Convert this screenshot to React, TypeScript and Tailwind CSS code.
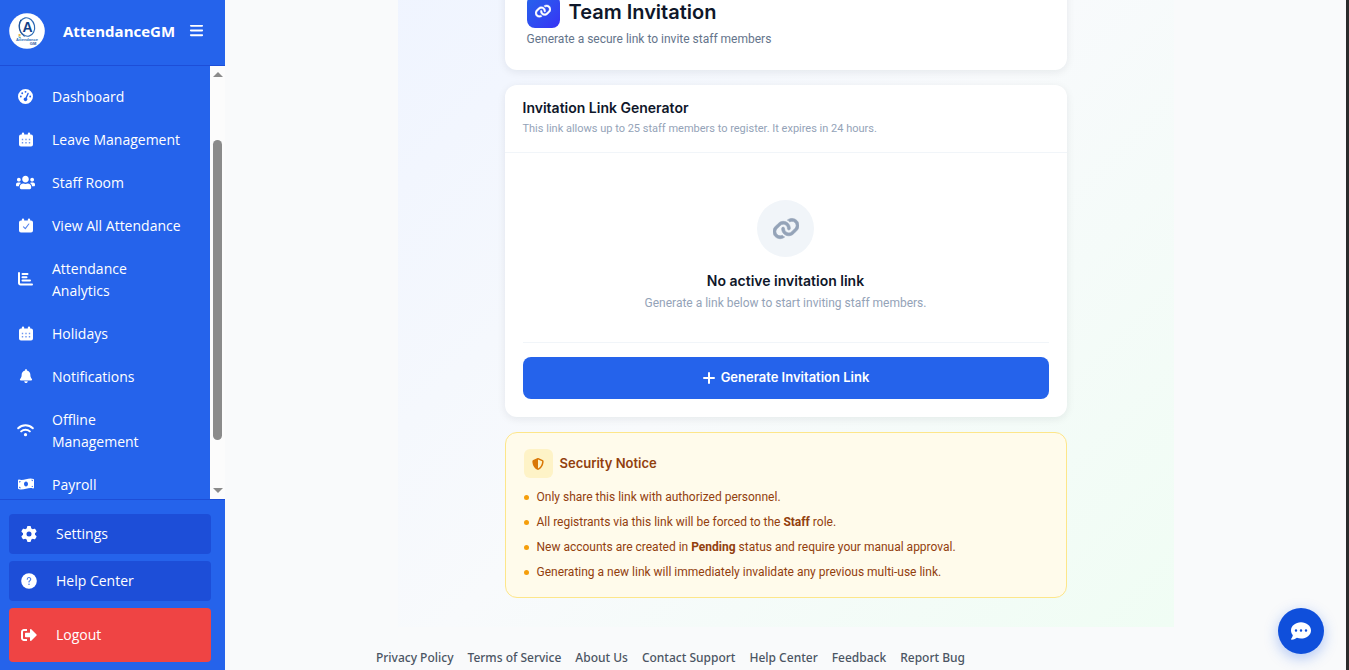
import React from 'react';
import { FaMoneyBillWave, FaSignOutAlt, FaUsers } from 'react-icons/fa';
import { FaBars, FaBell, FaCommentDots, FaGaugeHigh, FaGear, FaShieldHalved } from 'react-icons/fa6';

interface IconProps {
  className?: string;
}

const LinkIcon: React.FC<IconProps> = ({ className }) => (
  <svg viewBox="0 0 576 512" fill="currentColor" stroke="currentColor" strokeWidth="14" className={className} aria-hidden="true">
    <path d="M419.5 96c-16.6 0-32.7 4.5-46.8 12.7-15.8-16-34.2-29.4-54.5-39.5 28.2-24 64.1-37.2 101.3-37.2 86.4 0 156.5 70 156.5 156.5 0 41.5-16.5 81.3-45.8 110.6l-71.1 71.1c-29.3 29.3-69.1 45.8-110.6 45.8-86.4 0-156.5-70-156.5-156.5 0-1.5 0-3 .1-4.5 .5-17.7 15.2-31.6 32.9-31.1s31.6 15.2 31.1 32.9c0 .9 0 1.8 0 2.6 0 51.1 41.4 92.5 92.5 92.5 24.5 0 48-9.7 65.4-27.1l71.1-71.1c17.3-17.3 27.1-40.9 27.1-65.4 0-51.1-41.4-92.5-92.5-92.5zM275.2 173.3c-1.9-.8-3.8-1.9-5.5-3.1-12.6-6.5-27-10.2-42.1-10.2-24.5 0-48 9.7-65.4 27.1L91.1 258.2c-17.3 17.3-27.1 40.9-27.1 65.4 0 51.1 41.4 92.5 92.5 92.5 16.5 0 32.6-4.4 46.7-12.6 15.8 16 34.2 29.4 54.6 39.5-28.2 23.9-64 37.2-101.3 37.2-86.4 0-156.5-70-156.5-156.5 0-41.5 16.5-81.3 45.8-110.6l71.1-71.1c29.3-29.3 69.1-45.8 110.6-45.8 86.6 0 156.5 70.6 156.5 156.9 0 1.3 0 2.6 0 3.9-.4 17.7-15.1 31.6-32.8 31.2s-31.6-15.1-31.2-32.8c0-.8 0-1.5 0-2.3 0-33.7-18-63.3-44.8-79.6z" />
  </svg>
);

const CalendarBody: React.FC = () => (
  <path
    fill="currentColor"
    d="M4 .5a1.200 1.200 0 0 1 1.200 1.200V2.500h3.600V1.700a1.200 1.200 0 0 1 2.400 0V2.500H12a2 2 0 0 1 2 2v8a2 2 0 0 1-2 2H2a2 2 0 0 1-2-2v-8a2 2 0 0 1 2-2h.8V1.700A1.200 1.200 0 0 1 4 .5z"
  />
);

const CalendarIcon: React.FC<IconProps> = ({ className }) => (
  <svg viewBox="0 0 14 15" className={className} aria-hidden="true">
    <CalendarBody />
    <path
      fill="#6f97f1"
      d="M2.800 6.800h1.400v1.400H2.800zM6.300 6.800h1.400v1.400H6.300zM9.800 6.800h1.400v1.400H9.800zM2.800 10h1.400v1.400H2.800zM6.300 10h1.400v1.400H6.300zM9.800 10h1.400v1.400H9.800z"
    />
  </svg>
);

const CalendarCheckIcon: React.FC<IconProps> = ({ className }) => (
  <svg viewBox="0 0 14 15" className={className} aria-hidden="true">
    <CalendarBody />
    <path d="M4.500 8.800l1.800 1.800 3.500-4.600" fill="none" stroke="#5584ee" strokeWidth="1.100" strokeLinecap="round" strokeLinejoin="round" />
  </svg>
);

const ChartIcon: React.FC<IconProps> = ({ className }) => (
  <svg viewBox="0 0 15 14" fill="none" stroke="currentColor" strokeWidth="2" strokeLinecap="round" strokeLinejoin="round" className={className} aria-hidden="true">
    <path d="M1 1v10a1.500 1.500 0 0 0 1.500 1.500H14M4.500 2h5M4.500 5.300h4M4.500 8.600h7.500" />
  </svg>
);

const WifiIcon: React.FC<IconProps> = ({ className }) => (
  <svg viewBox="0 0 17 14" fill="none" stroke="currentColor" strokeWidth="2" strokeLinecap="round" className={className} aria-hidden="true">
    <path d="M1.200 5.200a10.500 10.500 0 0 1 14.600 0M4.200 8.400a6.200 6.200 0 0 1 8.600 0" />
    <circle cx="8.500" cy="11.700" r="1.600" fill="currentColor" stroke="none" />
  </svg>
);

const QuestionIcon: React.FC<IconProps> = ({ className }) => (
  <svg viewBox="0 0 16 16" fill="none" className={className} aria-hidden="true">
    <circle cx="8" cy="8" r="7.800" fill="currentColor" />
    <path d="M6.300 6.200a1.700 1.700 0 1 1 2.500 1.500c-.6.300-.8.600-.8 1.200" stroke="#4a7cec" strokeWidth="1.200" strokeLinecap="round" />
    <circle cx="8" cy="11.200" r=".8" fill="#4a7cec" />
  </svg>
);

const PlusIcon: React.FC<IconProps> = ({ className }) => (
  <svg viewBox="0 0 14 14" className={className} aria-hidden="true">
    <path d="M7 2v10M2 7h10" stroke="currentColor" strokeWidth="2" strokeLinecap="round" />
  </svg>
);

const Logo: React.FC = () => (
  <svg viewBox="0 0 36 36" className="size-9 shrink-0" role="img" aria-label="AttendanceGM logo">
    <circle cx="18" cy="18" r="17.800" fill="#fff" />
    <ellipse cx="18" cy="14" rx="7.600" ry="9.300" fill="none" stroke="#2f6db5" strokeWidth="1.200" transform="rotate(-12 18 14)" />
    <path d="M12 6.500C8.500 12 10 20 15.500 23.500" fill="none" stroke="#1d4f96" strokeWidth="1" />
    <text x="18.500" y="19" textAnchor="middle" fontSize="14" fontWeight="700" fontFamily="Liberation Sans, sans-serif" fill="#123f86">A</text>
    <path d="M9.500 21h2v2.500h-2z" fill="#e9b949" />
    <path d="M9.500 24l2.500 1" stroke="#3fa7d6" strokeWidth="1" />
    <text x="18" y="28" textAnchor="middle" fontSize="4" fontWeight="700" fontFamily="Liberation Sans, sans-serif" fill="#2f6db5">Attendance</text>
    <text x="24" y="32" textAnchor="middle" fontSize="4" fontWeight="700" fontFamily="Liberation Sans, sans-serif" fill="#1d4f96">GM</text>
  </svg>
);

const navItems = [
  { label: 'Dashboard', icon: <FaGaugeHigh className="size-[15px]" /> },
  { label: 'Leave Management', icon: <CalendarIcon className="h-[15px] w-[14px]" /> },
  { label: 'Staff Room', icon: <FaUsers className="size-[19px]" /> },
  { label: 'View All Attendance', icon: <CalendarCheckIcon className="h-[15px] w-[14px]" /> },
  { label: 'Attendance Analytics', icon: <ChartIcon className="h-[14px] w-[15px]" /> },
  { label: 'Holidays', icon: <CalendarIcon className="h-[15px] w-[14px]" /> },
  { label: 'Notifications', icon: <FaBell className="size-[14px]" /> },
  { label: 'Offline Management', icon: <WifiIcon className="h-[14px] w-[17px]" /> },
  { label: 'Payroll', icon: <FaMoneyBillWave className="size-4" /> },
];

const footerLinks = ['Privacy Policy', 'Terms of Service', 'About Us', 'Contact Support', 'Help Center', 'Feedback', 'Report Bug'];

const Sidebar: React.FC = () => (
  <aside className="flex h-screen w-[225px] shrink-0 flex-col bg-[#2563eb] text-sm font-medium text-white">
    <div className="flex h-[66px] shrink-0 items-center border-b border-[#1d4ed8] pb-1 pl-[9px]">
      <Logo />
      <span className="ml-[18px] text-[15px] leading-6 font-bold">AttendanceGM</span>
      <button type="button" aria-label="Toggle menu" className="ml-[14px]">
        <FaBars className="size-[15px]" />
      </button>
    </div>

    <div className="flex min-h-0 flex-1">
      <nav className="flex min-w-0 flex-1 flex-col gap-[5px] overflow-hidden pt-3">
        {navItems.map((item) => (
          <a key={item.label} href="#" className="flex shrink-0 items-center py-2 pl-[15px] leading-[22px]">
            <span className="flex w-[21px] shrink-0 justify-center pb-[2px]">{item.icon}</span>
            <span className="ml-4 max-w-[130px]">{item.label}</span>
          </a>
        ))}
      </nav>
      {/* scrollbar */}
      <div className="flex w-[15px] shrink-0 flex-col items-center bg-[#fcfcfc] py-[6px]">
        <svg viewBox="0 0 10 5" className="h-[5px] w-[10px]" aria-hidden="true">
          <path d="M5 0l5 5H0z" fill="#8b8b8b" />
        </svg>
        <div className="mt-[63px] mb-[48px] w-[9px] flex-1 rounded-full bg-[#8b8b8b]" />
        <svg viewBox="0 0 10 5" className="h-[5px] w-[10px]" aria-hidden="true">
          <path d="M0 0h10L5 5z" fill="#8b8b8b" />
        </svg>
      </div>
    </div>

    <div className="flex shrink-0 flex-col gap-[7px] border-t border-[#1d4ed8] px-[9px] pt-[14px] pb-2">
      <a href="#" className="mr-[5px] flex h-10 items-center rounded bg-[#1d4ed8] pl-3">
        <FaGear className="size-4" />
        <span className="ml-[19px]">Settings</span>
      </a>
      <a href="#" className="mr-[5px] flex h-10 items-center rounded bg-[#1d4ed8] pl-3">
        <QuestionIcon className="size-4" />
        <span className="ml-[19px]">Help Center</span>
      </a>
      <button type="button" className="mr-[5px] flex h-[54px] items-center rounded bg-[#ef4444] pl-3">
        <FaSignOutAlt className="size-4" />
        <span className="ml-[19px]">Logout</span>
      </button>
    </div>
  </aside>
);

const HeaderCard: React.FC = () => (
  <header className="rounded-xl bg-white p-[22px] shadow-[0_2px_8px_rgba(15,23,42,0.08)]">
    <div className="flex items-center gap-[9px]">
      <span className="flex size-[33px] items-center justify-center rounded-lg bg-linear-to-br from-[#2563eb] to-[#3730f5] text-white">
        <LinkIcon className="w-4" />
      </span>
      <h1 className="text-xl leading-7 font-semibold text-[#0f172a]">Team Invitation</h1>
    </div>
    <p className="mt-[2px] font-['Roboto',sans-serif] text-xs leading-[18px] text-[#64748b]">
      Generate a secure link to invite staff members
    </p>
  </header>
);

const GeneratorCard: React.FC = () => (
  <section className="rounded-xl bg-white shadow-[0_2px_8px_rgba(15,23,42,0.08)]">
    <div className="border-b border-[#f1f5f9] px-[18px] pt-[13px] pb-[14px]">
      <h2 className="text-sm leading-5 font-semibold text-[#0f172a]">Invitation Link Generator</h2>
      <p className="mt-[2px] font-['Roboto',sans-serif] text-[11px] leading-[18px] text-[#94a3b8]">
        This link allows up to 25 staff members to register. It expires in 24 hours.
      </p>
    </div>
    <div className="px-[18px] pb-[18px]">
      <div className="flex flex-col items-center pt-[47px] pb-[30px]">
        <span className="flex size-[57px] items-center justify-center rounded-full bg-[#f1f5f9] text-[#94a3b8]">
          <LinkIcon className="w-[26px]" />
        </span>
        <h3 className="mt-[14px] text-sm leading-5 font-semibold text-[#0f172a]">No active invitation link</h3>
        <p className="mt-[3px] font-['Roboto',sans-serif] text-xs leading-[18px] text-[#94a3b8]">
          Generate a link below to start inviting staff members.
        </p>
      </div>
      <div className="border-t border-[#f1f5f9] pt-[14px]">
        <button
          type="button"
          className="flex h-[42px] w-full items-center justify-center gap-[5px] rounded-lg bg-[#2563eb] text-[13px] font-semibold text-white"
        >
          <PlusIcon className="size-[14px]" />
          Generate Invitation Link
        </button>
      </div>
    </div>
  </section>
);

const SecurityNotice: React.FC = () => {
  const notes = [
    <>Only share this link with authorized personnel.</>,
    <>All registrants via this link will be forced to the <strong className="font-bold">Staff</strong> role.</>,
    <>New accounts are created in <strong className="font-bold">Pending</strong> status and require your manual approval.</>,
    <>Generating a new link will immediately invalidate any previous multi-use link.</>,
  ];

  return (
    <section className="rounded-xl border border-[#fde68a] bg-[#fffbeb] px-[18px] py-4 text-[#92400e]">
      <div className="flex items-center gap-[7px]">
        <span className="flex size-[29px] items-center justify-center rounded-md bg-[#fef3c7] text-[#d97706]">
          <FaShieldHalved className="size-3" />
        </span>
        <h2 className="text-[13px] font-semibold">Security Notice</h2>
      </div>
      <ul className="mt-[10px] flex flex-col gap-[7px] font-['Roboto',sans-serif]">
        {notes.map((note, index) => (
          <li key={index} className="flex items-center gap-2 text-xs leading-[18px]">
            <span className="size-[5px] shrink-0 rounded-full bg-[#f59e0b]" />
            <span>{note}</span>
          </li>
        ))}
      </ul>
    </section>
  );
};

const App: React.FC = () => {
  return (
    <div className="flex h-screen overflow-hidden border-r-[3px] border-[#2b2b2b] bg-[#f9fafb] font-['Open_Sans','Noto_Sans',sans-serif]">
      <Sidebar />
      {/* content sticks to the bottom edge, the upper part is scrolled away */}
      <div className="flex min-w-0 flex-1 flex-col justify-end">
        <main className="mx-auto w-full max-w-[776px] bg-linear-135 from-[#eff4ff] via-[#f8fafc] to-[#f0fdf4] px-[107px] pt-[29px] pb-[29px] font-['Inter',sans-serif]">
          <div className="flex flex-col gap-[15px]">
            <HeaderCard />
            <GeneratorCard />
            <SecurityNotice />
          </div>
        </main>
        <footer className="flex justify-center gap-[14px] pt-[22px] pr-[230px] pb-[3px] font-['Noto_Sans',sans-serif] text-xs leading-[18px] font-medium text-[#4b5563]">
          {footerLinks.map((label) => (
            <a key={label} href="#" className="whitespace-nowrap">{label}</a>
          ))}
        </footer>
      </div>
      <button
        type="button"
        aria-label="Open chat"
        className="fixed right-[25px] bottom-4 flex size-[46px] items-center justify-center rounded-full bg-[#0f4fdb] text-white shadow-[0_4px_14px_rgba(37,99,235,0.35)]"
      >
        <FaCommentDots className="size-5" />
      </button>
    </div>
  );
};

export default App;
